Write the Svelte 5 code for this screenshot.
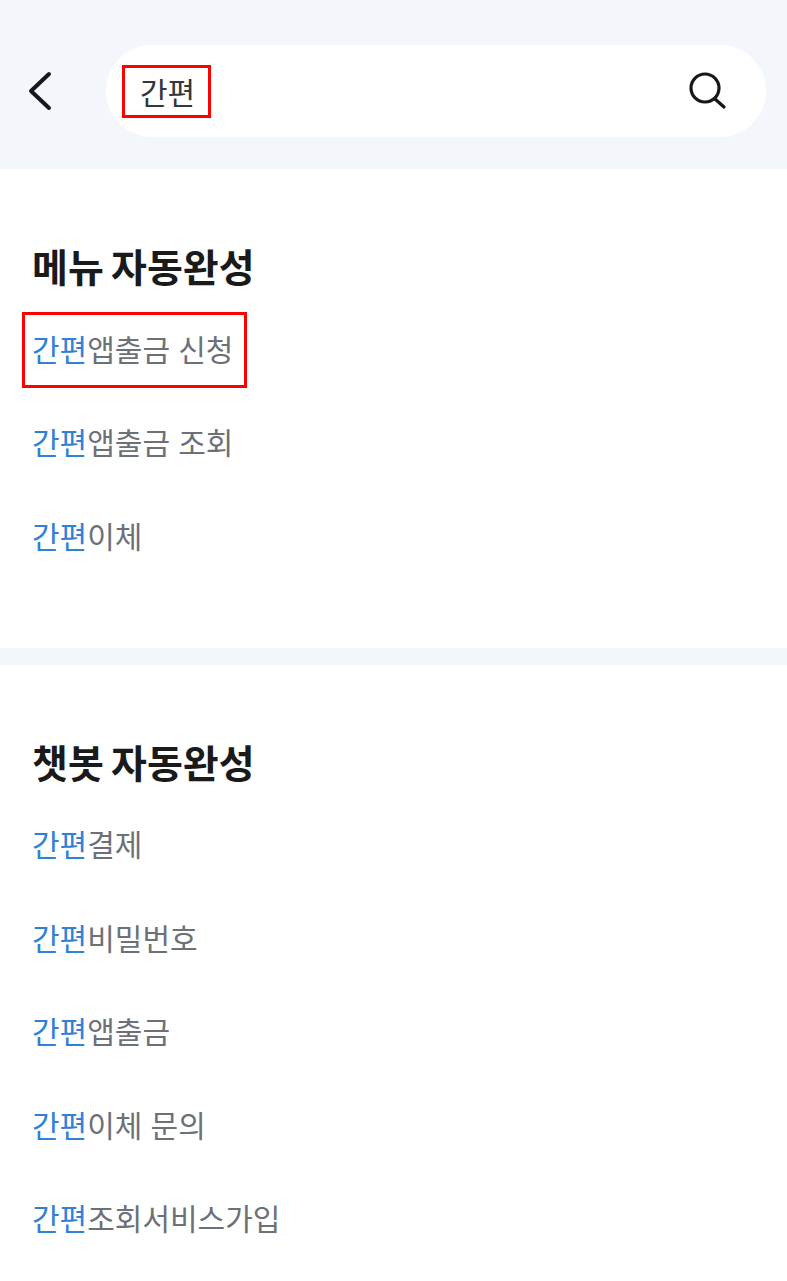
<script lang="ts">
	const sections = [
		{ title: '메뉴 자동완성', items: ['앱출금 신청', '앱출금 조회', '이체'] },
		{ title: '챗봇 자동완성', items: ['결제', '비밀번호', '앱출금', '이체 문의', '조회서비스가입'] }
	];
</script>

<div class="page">
	<header class="top">
		<svg class="back" width="26" height="40" viewBox="0 0 26 40" fill="none" stroke="#16181c" stroke-width="4" stroke-linecap="round" stroke-linejoin="round">
			<path d="M22 3 L4 20 L22 37" />
		</svg>
		<div class="search">
			<span class="query">간편</span>
			<svg width="40" height="40" viewBox="0 0 40 40" fill="none" stroke="#16181c" stroke-width="3.2" stroke-linecap="round">
				<circle cx="18" cy="17" r="14" />
				<path d="M28 28 L37 36" />
			</svg>
		</div>
	</header>

	{#each sections as section, i}
		<section class="group" class:first={i === 0}>
			<h2>{section.title}</h2>
			<ul>
				{#each section.items as item, j}
					<li>
						<span class="term" class:boxed={i === 0 && j === 0}><span class="hit">간편</span>{item}</span>
					</li>
				{/each}
			</ul>
		</section>
	{/each}
</div>

<style>
	:global(body) {
		margin: 0;
		background: #fff;
	}

	.page {
		width: 787px;
		height: 1281px;
		overflow: hidden;
		font-family: "Noto Sans CJK KR", "Noto Sans", sans-serif;
	}

	.top {
		height: 169px;
		box-sizing: border-box;
		background: #f3f6fb;
		padding: 45px 21px 0 27px;
		display: flex;
		align-items: flex-start;
		gap: 53px;
	}

	.back {
		margin-top: 26px;
		flex: none;
	}

	.search {
		flex: 1;
		height: 92px;
		border-radius: 46px;
		background: #fff;
		display: flex;
		align-items: center;
		justify-content: space-between;
		padding: 0 39px 0 16px;
	}

	.query {
		width: 89px;
		height: 53px;
		box-sizing: border-box;
		border: 3px solid #f00;
		padding-left: 2px;
		display: flex;
		align-items: center;
		justify-content: center;
		font-size: 30px;
		color: #33363b;
	}

	.group {
		padding: 66px 32px 0;
		border-top: 17px solid #f3f6fb;
	}

	.group.first {
		border-top: 0;
		padding-bottom: 66px;
	}

	h2 {
		margin: 0 0 6px;
		font-size: 39px;
		line-height: 60px;
		font-weight: 700;
		word-spacing: -1.5px;
		color: #1a1a1a;
	}

	ul {
		list-style: none;
		margin: 0;
		padding: 0;
	}

	li {
		height: 93.5px;
		display: flex;
		align-items: center;
		font-size: 30px;
		word-spacing: 1.5px;
		color: #6c7077;
	}

	.term {
		position: relative;
	}

	.term.boxed::after {
		content: "";
		position: absolute;
		left: -10px;
		right: -14px;
		top: -14px;
		bottom: -18px;
		border: 3px solid #f00;
	}

	.hit {
		color: #2f80d8;
	}
</style>
